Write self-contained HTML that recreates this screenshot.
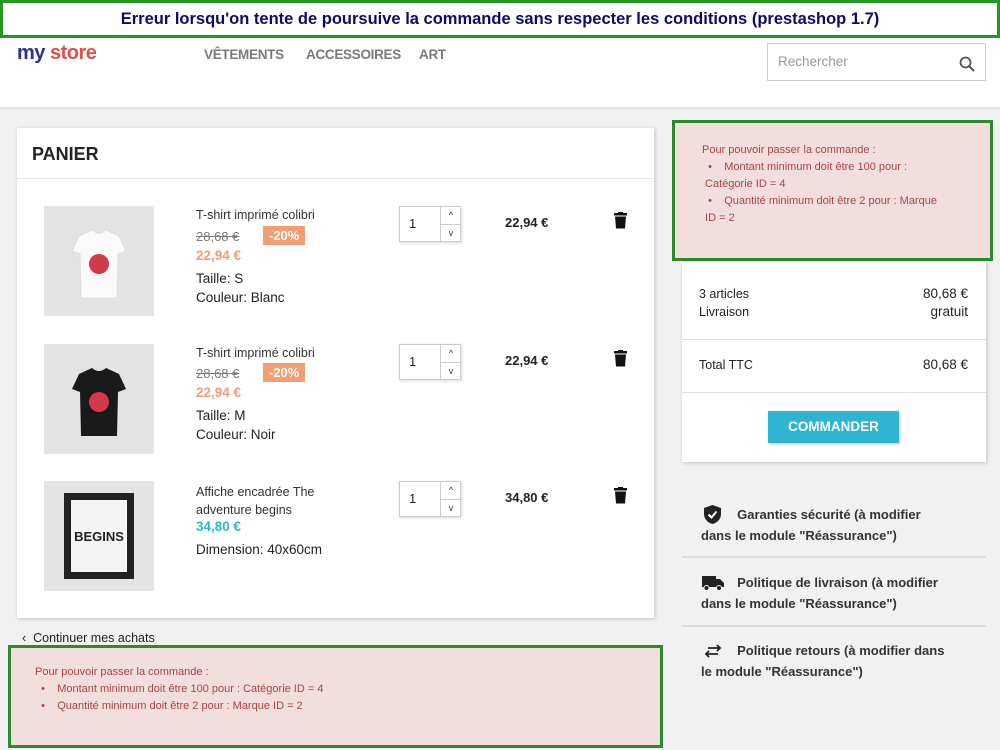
<!DOCTYPE html>
<html><head><meta charset="utf-8"><style>
*{box-sizing:border-box;margin:0;padding:0}
body{width:1000px;height:750px;overflow:hidden;background:#f1f1f1;font-family:"Liberation Sans","DejaVu Sans",sans-serif;color:#232323;position:relative;font-size:13px}
.a{position:absolute}
.hdr{left:0;top:0;width:1000px;height:107px;background:#fff;box-shadow:0 2px 3px rgba(0,0,0,.08)}
.title{left:0;top:0;width:1000px;height:38px;border:3px solid #1f9a1f;color:#0b0b6e;font-weight:bold;font-size:16.5px;text-align:center;line-height:32px;background:#fff}
.nav{top:47px;font-weight:bold;color:#7a7a7a;font-size:13.5px;letter-spacing:-.3px}
.card{background:#fff;box-shadow:1px 1px 4px rgba(0,0,0,.2)}
.img{width:110px;height:110px;background:#e3e3e3}
.pn{font-size:12.5px;color:#333}
.old{color:#7a7a7a;text-decoration:line-through;font-size:13px}
.disc{background:#f39d72;color:#fff;font-weight:bold;font-size:13px;padding:2px 6px}
.new{color:#f39d72;font-weight:bold;font-size:13.5px}
.qty{width:62px;height:36px;border:1px solid #ccc;box-shadow:1px 1px 3px rgba(0,0,0,.15);background:#fff}
.qty span{position:absolute;left:9px;top:9px;font-size:13px}
.qty i{position:absolute;left:40px;width:21px;height:17px;border-left:1px solid #ccc;font-style:normal;font-size:9px;text-align:center;line-height:17px;color:#333}
.price{font-weight:bold;font-size:13px}
.err{background:#f3dede;color:#a94442;font-size:11px;line-height:17px;border:3px solid #2b8a2b}
.err ul{list-style:none}
.rs{font-weight:bold;font-size:13px;line-height:21px;color:#333;white-space:nowrap}
.sep{height:2px;background:#ddd}
</style></head><body>
<div class="a hdr"></div>
<div class="a title">Erreur lorsqu'on tente de poursuive la commande sans respecter les conditions (prestashop 1.7)</div>
<div class="a" style="left:17px;top:42px;font-weight:bold;font-size:20px;letter-spacing:-.5px"><span style="color:#2e3192">my</span> <span style="color:#e94b4b">store</span></div>
<div class="a nav" style="left:204px">VÊTEMENTS</div>
<div class="a nav" style="left:306px">ACCESSOIRES</div>
<div class="a nav" style="left:419px">ART</div>
<div class="a" style="left:767px;top:43px;width:219px;height:38px;border:1px solid #ccc;background:#fff;color:#999;font-size:13.5px;padding:10px 10px"><span>Rechercher</span>
<svg class="a" style="right:10px;top:12px" width="16" height="16" viewBox="0 0 16 16"><circle cx="6.5" cy="6.5" r="5" fill="none" stroke="#555" stroke-width="1.8"/><path d="M10 10l5 5" stroke="#555" stroke-width="2"/></svg></div>

<div class="a card" style="left:17px;top:128px;width:637px;height:490px"></div>
<div class="a" style="left:32px;top:144px;font-weight:bold;font-size:18px">PANIER</div>
<div class="a" style="left:17px;top:178px;width:637px;height:1px;background:#e5e5e5"></div>

<div class="a img" style="left:44px;top:206px"><svg width="110" height="110"><path d="M35 30 L48 24 Q55 30 62 24 L75 30 L82 45 L74 48 L73 92 L37 92 L36 48 L28 45Z" fill="#fafafa" stroke="#ddd"/><circle cx="55" cy="58" r="10" fill="#d23a4a"/></svg></div>
<div class="a pn" style="left:196px;top:208px">T-shirt imprimé colibri</div>
<div class="a old" style="left:196px;top:229px">28,68 €</div>
<div class="a disc" style="left:263px;top:226px">-20%</div>
<div class="a new" style="left:196px;top:248px">22,94 €</div>
<div class="a" style="left:196px;top:271px;font-size:13.5px">Taille: S</div>
<div class="a" style="left:196px;top:290px;font-size:13.5px">Couleur: Blanc</div>
<div class="a qty" style="left:399px;top:206px"><span>1</span><i style="top:0">^</i><i style="top:17px;border-top:1px solid #ccc">v</i></div>
<div class="a price" style="left:505px;top:215px">22,94 €</div>
<svg class="a" style="left:614px;top:212px" width="13" height="17" viewBox="0 0 13 17"><rect x="0" y="1" width="13" height="2.5" fill="#111"/><rect x="4" y="0" width="5" height="2" fill="#111"/><path d="M1 4.5h11l-1 12H2z" fill="#111"/></svg>

<div class="a img" style="left:44px;top:344px"><svg width="110" height="110"><path d="M35 30 L48 24 Q55 30 62 24 L75 30 L82 45 L74 48 L73 92 L37 92 L36 48 L28 45Z" fill="#1a1a1a"/><circle cx="55" cy="58" r="10" fill="#d23a4a"/></svg></div>
<div class="a pn" style="left:196px;top:346px">T-shirt imprimé colibri</div>
<div class="a old" style="left:196px;top:366px">28,68 €</div>
<div class="a disc" style="left:263px;top:363px">-20%</div>
<div class="a new" style="left:196px;top:385px">22,94 €</div>
<div class="a" style="left:196px;top:408px;font-size:13.5px">Taille: M</div>
<div class="a" style="left:196px;top:427px;font-size:13.5px">Couleur: Noir</div>
<div class="a qty" style="left:399px;top:344px"><span>1</span><i style="top:0">^</i><i style="top:17px;border-top:1px solid #ccc">v</i></div>
<div class="a price" style="left:505px;top:353px">22,94 €</div>
<svg class="a" style="left:614px;top:350px" width="13" height="17" viewBox="0 0 13 17"><rect x="0" y="1" width="13" height="2.5" fill="#111"/><rect x="4" y="0" width="5" height="2" fill="#111"/><path d="M1 4.5h11l-1 12H2z" fill="#111"/></svg>

<div class="a img" style="left:44px;top:481px"><svg width="110" height="110"><rect x="20" y="12" width="70" height="86" fill="#222"/><rect x="27" y="19" width="56" height="72" fill="#f4f4f4"/><text x="55" y="60" font-size="13" font-weight="bold" text-anchor="middle" fill="#222" font-family="Liberation Sans">BEGINS</text></svg></div>
<div class="a pn" style="left:196px;top:483px;line-height:18px">Affiche encadrée The<br>adventure begins</div>
<div class="a new" style="left:196px;top:519px;color:#2fb5d2">34,80 €</div>
<div class="a" style="left:196px;top:542px;font-size:13.5px">Dimension: 40x60cm</div>
<div class="a qty" style="left:399px;top:481px"><span>1</span><i style="top:0">^</i><i style="top:17px;border-top:1px solid #ccc">v</i></div>
<div class="a price" style="left:505px;top:490px">34,80 €</div>
<svg class="a" style="left:614px;top:487px" width="13" height="17" viewBox="0 0 13 17"><rect x="0" y="1" width="13" height="2.5" fill="#111"/><rect x="4" y="0" width="5" height="2" fill="#111"/><path d="M1 4.5h11l-1 12H2z" fill="#111"/></svg>

<div class="a" style="left:22px;top:631px;font-size:12.5px">‹&nbsp; Continuer mes achats</div>
<div class="a err" style="left:8px;top:645px;width:655px;height:103px;padding:16px 24px">Pour pouvoir passer la commande :<ul><li>&nbsp;&nbsp;•&nbsp;&nbsp;&nbsp; Montant minimum doit être 100 pour : Catégorie ID = 4</li><li>&nbsp;&nbsp;•&nbsp;&nbsp;&nbsp; Quantité minimum doit être 2 pour : Marque ID = 2</li></ul></div>

<div class="a err" style="left:672px;top:120px;width:321px;height:141px;padding:19px 25px 0 27px">Pour pouvoir passer la commande :<ul><li>&nbsp;&nbsp;•&nbsp;&nbsp;&nbsp; Montant minimum doit être 100 pour :<br>&nbsp;Catégorie ID = 4</li><li>&nbsp;&nbsp;•&nbsp;&nbsp;&nbsp; Quantité minimum doit être 2 pour : Marque<br>&nbsp;ID = 2</li></ul></div>

<div class="a card" style="left:682px;top:262px;width:304px;height:200px"></div>
<div class="a" style="left:699px;top:285px;font-size:12.5px;line-height:18px">3 articles<br>Livraison</div>
<div class="a" style="left:860px;top:285px;width:108px;text-align:right;font-size:13.5px;line-height:18px">80,68 €<br>gratuit</div>
<div class="a" style="left:682px;top:339px;width:304px;height:1px;background:#ddd"></div>
<div class="a" style="left:699px;top:358px;font-size:12.5px">Total TTC</div>
<div class="a" style="left:860px;top:357px;width:108px;text-align:right;font-size:13.5px">80,68 €</div>
<div class="a" style="left:682px;top:392px;width:304px;height:1px;background:#ddd"></div>
<div class="a" style="left:768px;top:411px;width:131px;height:32px;background:#2fb5d2;color:#fff;font-weight:bold;font-size:13.5px;text-align:center;line-height:32px;box-shadow:1px 1px 3px rgba(0,0,0,.25)">COMMANDER</div>

<svg class="a" style="left:704px;top:505px" width="17" height="19" viewBox="0 0 17 19"><path d="M8.5 0L17 3v6c0 5-4 9-8.5 10C4 18 0 14 0 9V3z" fill="#222"/><path d="M4.5 9.5l3 3 5-6" stroke="#fff" stroke-width="2" fill="none"/></svg>
<div class="a rs" style="left:701px;top:504px">&nbsp;&nbsp;&nbsp;&nbsp;&nbsp;&nbsp;&nbsp;&nbsp;&nbsp; Garanties sécurité (à modifier<br>dans le module "Réassurance")</div>
<div class="a sep" style="left:682px;top:556px;width:304px"></div>
<svg class="a" style="left:702px;top:575px" width="22" height="16" viewBox="0 0 22 16"><rect x="0" y="1" width="14" height="11" fill="#222"/><path d="M14 4h4l4 4v4h-8z" fill="#222"/><circle cx="4.5" cy="13" r="2.5" fill="#222" stroke="#f1f1f1"/><circle cx="17" cy="13" r="2.5" fill="#222" stroke="#f1f1f1"/></svg>
<div class="a rs" style="left:701px;top:572px">&nbsp;&nbsp;&nbsp;&nbsp;&nbsp;&nbsp;&nbsp;&nbsp;&nbsp; Politique de livraison (à modifier<br>dans le module "Réassurance")</div>
<div class="a sep" style="left:682px;top:625px;width:304px"></div>
<svg class="a" style="left:704px;top:644px" width="18" height="14" viewBox="0 0 18 14"><path d="M4 4h12M13 1l3 3-3 3M14 10H2M5 7l-3 3 3 3" stroke="#222" stroke-width="1.8" fill="none"/></svg>
<div class="a rs" style="left:701px;top:640px">&nbsp;&nbsp;&nbsp;&nbsp;&nbsp;&nbsp;&nbsp;&nbsp;&nbsp; Politique retours (à modifier dans<br>le module "Réassurance")</div>
</body></html>
